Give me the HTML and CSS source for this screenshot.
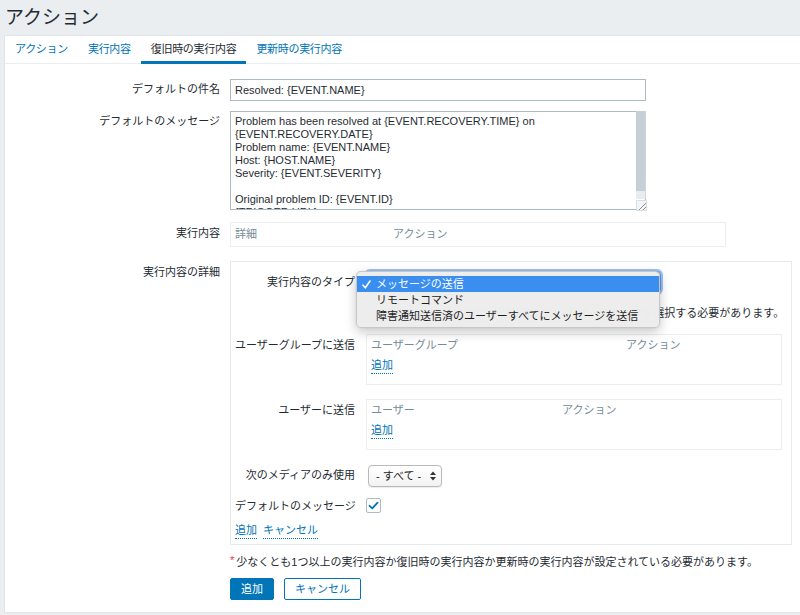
FILE: index.html
```html
<!DOCTYPE html>
<html lang="ja">
<head>
<meta charset="utf-8">
<title>アクション</title>
<link rel="stylesheet" href="styles.css">
</head>
<body>
<header class="page-header">
  <h1 class="page-title">アクション</h1>
</header>
<main class="panel">
  <nav class="tabs">
    <a class="tab">アクション</a>
    <a class="tab">実行内容</a>
    <a class="tab is-active">復旧時の実行内容</a>
    <a class="tab">更新時の実行内容</a>
  </nav>
  <form class="form">
    <div class="form-row row-subject">
      <label class="form-label">デフォルトの件名</label>
      <div class="form-field"><input class="text-input" type="text" value="Resolved: {EVENT.NAME}"></div>
    </div>
    <div class="form-row row-message">
      <label class="form-label">デフォルトのメッセージ</label>
      <div class="form-field">
        <div class="textarea-wrap">
          <textarea class="textarea">Problem has been resolved at {EVENT.RECOVERY.TIME} on
{EVENT.RECOVERY.DATE}
Problem name: {EVENT.NAME}
Host: {HOST.NAME}
Severity: {EVENT.SEVERITY}

Original problem ID: {EVENT.ID}
{TRIGGER.URL}</textarea>
          <div class="scrollbar"><div class="scroll-thumb"></div></div>
          <div class="resizer">
            <svg width="11" height="11" viewBox="0 0 11 11"><path d="M10 3L3 10M10 7L7 10" stroke="#8a8f93" stroke-width="1" fill="none"/></svg>
          </div>
        </div>
      </div>
    </div>
    <div class="form-row row-ops">
      <label class="form-label">実行内容</label>
      <div class="form-field">
        <div class="table-box ops-box">
          <div class="table-head"><span class="col-ops">詳細</span><span>アクション</span></div>
        </div>
      </div>
    </div>
    <div class="form-row row-details">
      <label class="form-label">実行内容の詳細</label>
      <div class="form-field">
        <div class="details-box">
          <div class="sub-row sub-type">
            <span class="sub-label">実行内容のタイプ</span>
            <div class="sub-field">
              <div class="select-wrap">
                <div class="mac-select is-focused">メッセージの送信</div>
                <ul class="popup-menu">
                  <li class="popup-item is-selected"><svg class="popup-check" width="9" height="9" viewBox="0 0 9 9"><path d="M1 5.2L3.3 7.8L8 1" stroke="#fff" stroke-width="1.6" fill="none" stroke-linecap="round" stroke-linejoin="round"/></svg>メッセージの送信</li>
                  <li class="popup-item">リモートコマンド</li>
                  <li class="popup-item">障害通知送信済のユーザーすべてにメッセージを送信</li>
                </ul>
              </div>
            </div>
          </div>
          <div class="sub-row sub-note">
            <span class="sub-label"></span>
            <div class="sub-field"><p class="note"><span class="asterisk">*</span>少なくとも1つのユーザーまたはユーザーグループを選択する必要があります。</p></div>
          </div>
          <div class="sub-row sub-list">
            <span class="sub-label">ユーザーグループに送信</span>
            <div class="sub-field">
              <div class="table-box list-box">
                <div class="table-head"><span class="col-groups">ユーザーグループ</span><span>アクション</span></div>
                <div class="list-actions"><a class="link-action">追加</a></div>
              </div>
            </div>
          </div>
          <div class="sub-row sub-list">
            <span class="sub-label">ユーザーに送信</span>
            <div class="sub-field">
              <div class="table-box list-box">
                <div class="table-head"><span class="col-users">ユーザー</span><span>アクション</span></div>
                <div class="list-actions"><a class="link-action">追加</a></div>
              </div>
            </div>
          </div>
          <div class="sub-row sub-media">
            <span class="sub-label">次のメディアのみ使用</span>
            <div class="sub-field">
              <div class="media-select">- すべて -
                <svg class="select-arrows" width="6" height="10" viewBox="0 0 6 10"><path d="M0 4L3 0.5L6 4Z M0 6L3 9.5L6 6Z" fill="#333"/></svg>
              </div>
            </div>
          </div>
          <div class="sub-row sub-check">
            <span class="sub-label">デフォルトのメッセージ</span>
            <div class="sub-field">
              <span class="checkbox"><svg width="13" height="13" viewBox="0 0 13 13"><path d="M2.5 6.8L5.2 9.4L10.6 3.6" stroke="#0275b8" stroke-width="1.8" fill="none" stroke-linecap="round" stroke-linejoin="round"/></svg></span>
            </div>
          </div>
          <div class="sub-links">
            <a class="link-action">追加</a>
            <a class="link-action">キャンセル</a>
          </div>
        </div>
      </div>
    </div>
    <div class="form-row row-required">
      <span class="form-label"></span>
      <div class="form-field"><p class="required-note"><span class="asterisk">*</span>少なくとも1つ以上の実行内容か復旧時の実行内容か更新時の実行内容が設定されている必要があります。</p></div>
    </div>
    <div class="form-row row-buttons">
      <span class="form-label"></span>
      <div class="form-field buttons">
        <button type="button" class="btn btn-primary">追加</button>
        <button type="button" class="btn btn-alt">キャンセル</button>
      </div>
    </div>
  </form>
</main>
</body>
</html>
```

FILE: styles.css
```css
* { box-sizing: border-box; }

html, body { margin: 0; padding: 0; }

body {
  width: 800px;
  height: 615px;
  overflow: hidden;
  background: #ebeef1;
  color: #1f2c33;
  font-family: "Liberation Sans", "Noto Sans CJK JP", sans-serif;
  font-size: 11px;
  line-height: 14px;
}

.page-header {
  height: 35px;
  padding-left: 5px;
}

.page-title {
  margin: 0;
  font-size: 19px;
  font-weight: normal;
  line-height: 35px;
  color: #1f2c33;
}

.panel {
  display: block;
  margin-left: 4px;
  height: 578px;
  background: #fff;
  border: 1px solid #dfe4e7;
  border-right: 0;
}

.tabs {
  display: flex;
  height: 28px;
  border-bottom: 1px solid #ebeef1;
}

.tab {
  display: block;
  height: 28px;
  padding: 2px 10px 0;
  line-height: 23px;
  letter-spacing: -0.3px;
  color: #0275b8;
  border-bottom: 3px solid transparent;
  text-decoration: none;
}

.tab.is-active {
  color: #1f2c33;
  border-bottom-color: #0275b8;
}

.form {
  margin: 0;
  padding-top: 15px;
}

.form-row {
  display: grid;
  grid-template-columns: 215px 1fr;
  column-gap: 10px;
}

.form-label {
  display: block;
  text-align: right;
  padding-top: 4px;
  line-height: 14px;
  white-space: nowrap;
}

.row-subject .form-label { padding-top: 3px; }
.row-message { margin-top: 10px; }
.row-message .form-label { padding-top: 3px; }
.row-ops { margin-top: 12px; }
.row-details { margin-top: 14px; }
.row-required { margin-top: 10px; }
.row-buttons { margin-top: 9px; }

.text-input {
  display: block;
  width: 416px;
  height: 22px;
  margin: 0;
  padding: 0 4px;
  border: 1px solid #acbbc2;
  background: #fff;
  color: #1f2c33;
  font-family: "Liberation Sans", "Noto Sans CJK JP", sans-serif;
  font-size: 11px;
  outline: none;
}

.textarea-wrap {
  position: relative;
  width: 416px;
  height: 99px;
}

.textarea {
  display: block;
  width: 416px;
  height: 99px;
  margin: 0;
  padding: 3px 12px 3px 4px;
  border: 1px solid #acbbc2;
  background: #fff;
  color: #1f2c33;
  font-family: "Liberation Sans", "Noto Sans CJK JP", sans-serif;
  font-size: 11px;
  line-height: 13px;
  overflow: hidden;
  resize: none;
  white-space: pre;
  outline: none;
}

.scrollbar {
  position: absolute;
  right: 0;
  top: 0;
  width: 10px;
  height: 88px;
  background: #e8ecee;
  border-right: 1px solid #cfd8dc;
}

.scroll-thumb {
  width: 9px;
  height: 80px;
  background: #c6cfd5;
}

.resizer {
  position: absolute;
  right: -1px;
  bottom: -1px;
  width: 11px;
  height: 11px;
  background: #f4f5f6;
  border: 1px solid #dcdfe1;
}

.resizer svg { display: block; position: absolute; left: -1px; top: -1px; }

.table-box {
  border: 1px solid #ebeef1;
  background: #fff;
}

.table-head {
  display: flex;
  color: #768d99;
  white-space: nowrap;
}

.ops-box {
  width: 496px;
  height: 25px;
  padding: 5px 4px;
}

.ops-box .table-head { line-height: 13px; }

.col-ops { width: 158px; }
.col-groups { width: 255px; }
.col-users { width: 191px; }

.details-box {
  width: 562px;
  border: 1px solid #e6eaed;
  padding: 0 9px 5px 4px;
}

.sub-row {
  display: grid;
  grid-template-columns: 120px 1fr;
  column-gap: 11px;
}

.sub-label {
  display: block;
  text-align: right;
  white-space: nowrap;
  padding-top: 4px;
  line-height: 14px;
}

.sub-type { margin-top: 9px; }
.sub-note { margin-top: 13px; }
.sub-list { margin-top: 14px; }
.sub-media { margin-top: 15px; }
.sub-media .sub-label { padding-top: 3px; }
.sub-check { margin-top: 11px; }
.sub-check .sub-label { padding-top: 1px; }

.select-wrap {
  position: relative;
  width: 295px;
  height: 22px;
}

.mac-select {
  height: 22px;
  padding: 0 8px;
  line-height: 20px;
  border: 1px solid #5f95da;
  border-radius: 4px;
  background: #fff;
  box-shadow: 0 0 0 2px rgba(72, 145, 235, 0.55);
  color: #222;
}

.popup-menu {
  position: absolute;
  left: -10px;
  top: 0;
  width: 304px;
  margin: 0;
  padding: 4px 0 3px;
  list-style: none;
  background: rgba(237, 237, 237, 0.99);
  border: 1px solid rgba(0, 0, 0, 0.16);
  border-radius: 5px;
  box-shadow: 0 4px 12px rgba(0, 0, 0, 0.22), 0 0 1px rgba(0, 0, 0, 0.2);
  z-index: 5;
}

.popup-item {
  position: relative;
  height: 16px;
  padding-left: 19px;
  line-height: 16px;
  color: #1e1e1e;
  white-space: nowrap;
}

.popup-item.is-selected {
  background: #3a8ef0;
  color: #fff;
}

.popup-check {
  position: absolute;
  left: 5px;
  top: 4px;
}

.note {
  margin: 0;
  padding-left: 22px;
  line-height: 14px;
  white-space: nowrap;
}

.asterisk {
  color: #e33734;
  position: relative;
  top: -2px;
  margin-right: 3px;
}

.list-box {
  width: 416px;
  height: 51px;
  padding: 3px 4px 0;
}

.list-actions {
  margin-top: 6px;
  line-height: 14px;
}

.link-action {
  display: inline-block;
  color: #0275b8;
  text-decoration: none;
  line-height: 14px;
  padding-bottom: 1px;
  border-bottom: 1px dotted #0275b8;
  cursor: pointer;
}

.media-select {
  position: relative;
  width: 74px;
  height: 22px;
  margin-left: 2px;
  padding-left: 7px;
  line-height: 20px;
  border: 1px solid #b9b9b9;
  border-radius: 4px;
  background: linear-gradient(#ffffff, #f2f2f2);
  box-shadow: 0 1px 1px rgba(0, 0, 0, 0.08);
  color: #222;
  white-space: nowrap;
}

.select-arrows {
  position: absolute;
  right: 5px;
  top: 5px;
}

.checkbox {
  display: block;
  width: 15px;
  height: 15px;
  border: 1px solid #acbbc2;
  border-radius: 2px;
  background: #fff;
}

.checkbox svg { display: block; }

.sub-links {
  display: flex;
  gap: 6px;
  margin-top: 10px;
}

.required-note {
  margin: 0;
  line-height: 14px;
  white-space: nowrap;
}

.required-note .asterisk { margin-right: 2px; }

.buttons {
  display: flex;
  gap: 10px;
}

.btn {
  height: 22px;
  margin: 0;
  padding: 0 10px;
  border-radius: 2px;
  font-family: "Liberation Sans", "Noto Sans CJK JP", sans-serif;
  font-size: 11px;
  line-height: 20px;
  cursor: pointer;
}

.btn-primary {
  background: #0275b8;
  border: 1px solid #0275b8;
  color: #fff;
}

.btn-alt {
  background: #fff;
  border: 1px solid #0275b8;
  color: #0275b8;
}
```
